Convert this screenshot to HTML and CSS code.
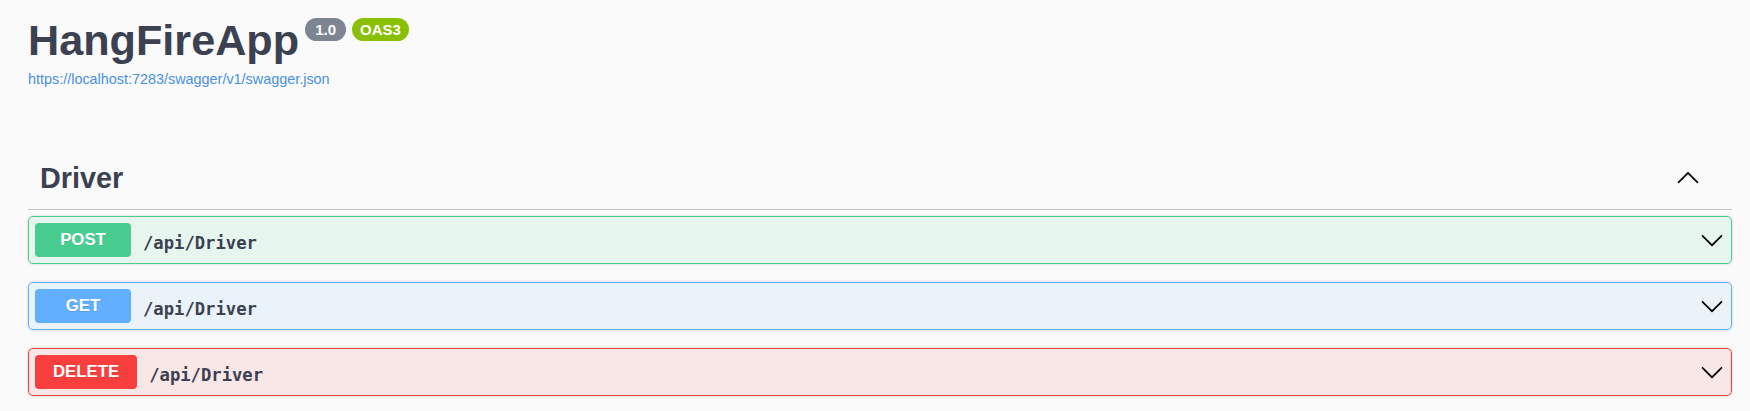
FILE: index.html
```html
<!DOCTYPE html>
<html lang="en">
<head>
<meta charset="utf-8">
<title>HangFireApp</title>
<link rel="stylesheet" href="styles.css">
</head>
<body>
<div class="page">
  <div class="info">
    <h2 class="title"><span class="title-text">HangFireApp</span><small class="badge version">1.0</small><small class="badge stamp">OAS3</small></h2>
    <a class="url" href="#">https://localhost:7283/swagger/v1/swagger.json</a>
  </div>

  <section class="tag-section">
    <h3 class="tag">
      <span class="tag-name">Driver</span>
      <svg class="tag-arrow" width="24" height="24" viewBox="0 0 20 20"><path d="M17.418 14.908C17.69 15.176 18.127 15.176 18.397 14.908C18.667 14.64 18.668 14.207 18.397 13.939L10.489 6.109C10.219 5.841 9.782 5.841 9.51 6.109L1.602 13.939C1.332 14.207 1.332 14.64 1.602 14.908C1.873 15.176 2.311 15.176 2.581 14.908L10 7.767L17.418 14.908Z"/></svg>
    </h3>

    <div class="opblock post">
      <span class="method">POST</span>
      <span class="path">/api/Driver</span>
      <svg class="op-arrow" width="24" height="24" viewBox="0 0 20 20"><path d="M17.418 6.109c.272-.268.709-.268.979 0s.271.701 0 .969l-7.908 7.83c-.27.268-.707.268-.979 0l-7.908-7.830c-.27-.268-.27-.701 0-.969.271-.268.709-.268.979 0L10 13.25l7.418-7.141z"/></svg>
    </div>

    <div class="opblock get">
      <span class="method">GET</span>
      <span class="path">/api/Driver</span>
      <svg class="op-arrow" width="24" height="24" viewBox="0 0 20 20"><path d="M17.418 6.109c.272-.268.709-.268.979 0s.271.701 0 .969l-7.908 7.83c-.27.268-.707.268-.979 0l-7.908-7.83c-.27-.268-.27-.701 0-.969.271-.268.709-.268.979 0L10 13.25l7.418-7.141z"/></svg>
    </div>

    <div class="opblock delete">
      <span class="method">DELETE</span>
      <span class="path">/api/Driver</span>
      <svg class="op-arrow" width="24" height="24" viewBox="0 0 20 20"><path d="M17.418 6.109c.272-.268.709-.268.979 0s.271.701 0 .969l-7.908 7.83c-.27.268-.707.268-.979 0l-7.908-7.83c-.27-.268-.27-.701 0-.969.271-.268.709-.268.979 0L10 13.25l7.418-7.141z"/></svg>
    </div>
  </section>
</div>
</body>
</html>
```

FILE: styles.css
```css
html, body {
  margin: 0;
  padding: 0;
  background: #fafafa;
}

.page {
  padding: 15px 18px 0 28px;
  font-family: "Liberation Sans", Arial, sans-serif;
  color: #3b4151;
}

.info {
  display: flex;
  flex-direction: column;
  align-items: flex-start;
}

.title {
  display: flex;
  align-items: flex-start;
  margin: 0;
  font-size: 43.2px;
  line-height: 50px;
  font-weight: 700;
  color: #3b4151;
}

.badge {
  display: inline-block;
  margin: 3px 0 0 6px;
  padding: 4px 9px;
  border-radius: 57px;
  font-size: 15px;
  line-height: 15px;
  font-weight: 700;
  color: #fff;
}

.version {
  background: #7d8492;
  padding: 4px 10px;
}

.stamp {
  background: #89bf04;
  padding: 4px 8px;
}

.url {
  margin-top: 6px;
  font-size: 14.4px;
  line-height: 17px;
  color: #4990e2;
  text-decoration: none;
}

.tag-section {
  margin-top: 57px;
}

.tag {
  display: flex;
  align-items: center;
  margin: 0 0 6px;
  padding: 12px 32px 12px 12px;
  border-bottom: 1px solid rgba(59, 65, 81, 0.3);
}

.tag-name {
  flex: 1;
  padding-top: 3px;
  font-size: 28.8px;
  line-height: 37px;
  font-weight: 700;
  color: #3b4151;
}

.tag-arrow {
  display: block;
  fill: #000;
}

.opblock {
  display: flex;
  align-items: center;
  margin-bottom: 18px;
  padding: 6px;
  border: 1px solid;
  border-radius: 5px;
  box-shadow: 0 0 3px rgba(0, 0, 0, 0.19);
}

.method {
  box-sizing: border-box;
  min-width: 96px;
  padding: 7px 18px;
  border-radius: 4px;
  font-size: 16.8px;
  line-height: 20px;
  font-weight: 700;
  color: #fff;
  text-align: center;
  text-shadow: 0 1px 0 rgba(0, 0, 0, 0.1);
}

.path {
  flex: 1;
  padding: 6px 12px 0;
  font-family: "DejaVu Sans Mono", "Liberation Mono", monospace;
  font-size: 17.2px;
  line-height: 20px;
  font-weight: 700;
  color: #3b4151;
}

.op-arrow {
  display: block;
  margin-right: 1px;
  fill: #000;
}

.post {
  background: rgba(73, 204, 144, 0.1);
  border-color: #49cc90;
}

.post .method {
  background: #49cc90;
}

.get {
  background: rgba(97, 175, 254, 0.1);
  border-color: #61affe;
}

.get .method {
  background: #61affe;
}

.delete {
  background: rgba(249, 62, 62, 0.1);
  border-color: #f93e3e;
}

.delete .method {
  background: #f93e3e;
}
```
